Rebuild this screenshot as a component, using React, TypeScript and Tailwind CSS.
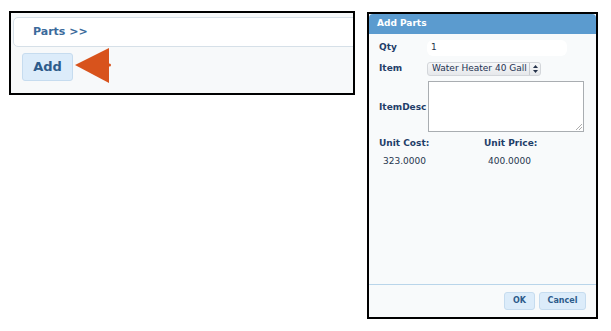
export default function App() {
  return (
    <div
      className="flex h-[331px] w-[611px] items-start bg-white"
      style={{ fontFamily: '"DejaVu Sans", Verdana, sans-serif' }}
    >
      {/* Parts page with the Add button */}
      <div className="relative ml-[9px] mt-[11px] h-[84px] w-[346px] overflow-hidden border-2 border-black bg-[#f7f9fa]">
        <div className="ml-[2px] mt-[4px] flex h-[30px] w-[400px] items-center rounded-l-[5px] border border-[#d6e0e8] bg-white pl-[19px]">
          <span className="text-[11px] font-bold text-[#3b6a9b]">Parts &gt;&gt;</span>
        </div>
        <div className="ml-[11px] mt-[6px] flex h-[28px] w-[51px] items-center justify-center rounded-[3px] border border-[#c6dcef] bg-[#dcecfa]">
          <span className="text-[13px] font-bold text-[#2d5b8b]">Add</span>
        </div>
        <svg
          className="absolute left-[62px] top-[35px]"
          width="40"
          height="36"
          viewBox="0 0 40 36"
        >
          <polygon points="2,17 36,0 36,35" fill="#d8531c" />
          <circle cx="36.5" cy="17" r="1.5" fill="#d8531c" />
        </svg>
      </div>

      {/* Add Parts dialog */}
      <div className="ml-[12px] mt-[12px] flex h-[307px] w-[231px] flex-col border-2 border-black bg-[#f8fafb]">
        <div className="flex h-[20px] items-center rounded-t-[4px] bg-[#5b9bcf] pl-[8px]">
          <span className="text-[9px] font-bold text-white">Add Parts</span>
        </div>

        <div className="flex flex-1 flex-col px-[10px] pt-[5px]">
          <div className="flex h-[18px] items-center">
            <span className="w-[48px] text-[9px] font-bold text-[#1f3e69]">Qty</span>
            <div className="flex h-[16px] w-[140px] items-center rounded-[6px] bg-white pl-[4px]">
              <span className="text-[9px] text-[#26364d]">1</span>
            </div>
          </div>

          <div className="mt-[3px] flex h-[18px] items-center">
            <span className="w-[48px] text-[9px] font-bold text-[#1f3e69]">Item</span>
            <div className="flex h-[14px] w-[114px] items-center rounded-[3px] border border-[#d3d6da] bg-gradient-to-b from-[#f7f8f9] to-[#e6e8eb] pl-[4px]">
              <span className="flex-1 whitespace-nowrap text-[9px] text-[#1e3252]">Water Heater 40 Gall</span>
              <div className="flex h-[12px] w-[11px] flex-col items-center justify-center border-l border-[#c9ccd0]">
                <svg width="5" height="8" viewBox="0 0 5 8">
                  <polygon points="2.5,0 5,3 0,3" fill="#24324a" />
                  <polygon points="0,5 5,5 2.5,8" fill="#24324a" />
                </svg>
              </div>
            </div>
          </div>

          <div className="mt-[3px] flex items-start">
            <span className="mt-[20px] w-[49px] text-[9px] font-bold text-[#1f3e69]">ItemDesc</span>
            <div className="relative h-[51px] w-[156px] border border-[#a9adb1] bg-white">
              <svg className="absolute bottom-[1px] right-[1px]" width="6" height="6" viewBox="0 0 6 6">
                <line x1="0" y1="6" x2="6" y2="0" stroke="#999" strokeWidth="0.8" />
                <line x1="3" y1="6" x2="6" y2="3" stroke="#999" strokeWidth="0.8" />
              </svg>
            </div>
          </div>

          <div className="mt-[5px] grid grid-cols-[105px_1fr]">
            <span className="text-[9px] font-bold text-[#1f3e69]">Unit Cost:</span>
            <span className="text-[9px] font-bold text-[#1f3e69]">Unit Price:</span>
            <span className="mt-[4px] pl-[4px] text-[9px] text-[#26364d]">323.0000</span>
            <span className="mt-[4px] pl-[4px] text-[9px] text-[#26364d]">400.0000</span>
          </div>
        </div>

        <div className="flex h-[33px] items-center justify-end gap-[4px] border-t border-[#b9d5ea] pr-[10px]">
          <div className="flex h-[18px] w-[31px] items-center justify-center rounded-[3px] border border-[#c6dcef] bg-[#dcecfa]">
            <span className="text-[8px] font-bold text-[#2d5b8b]">OK</span>
          </div>
          <div className="flex h-[18px] w-[47px] items-center justify-center rounded-[3px] border border-[#c6dcef] bg-[#dcecfa]">
            <span className="text-[8px] font-bold text-[#2d5b8b]">Cancel</span>
          </div>
        </div>
      </div>
    </div>
  );
}
